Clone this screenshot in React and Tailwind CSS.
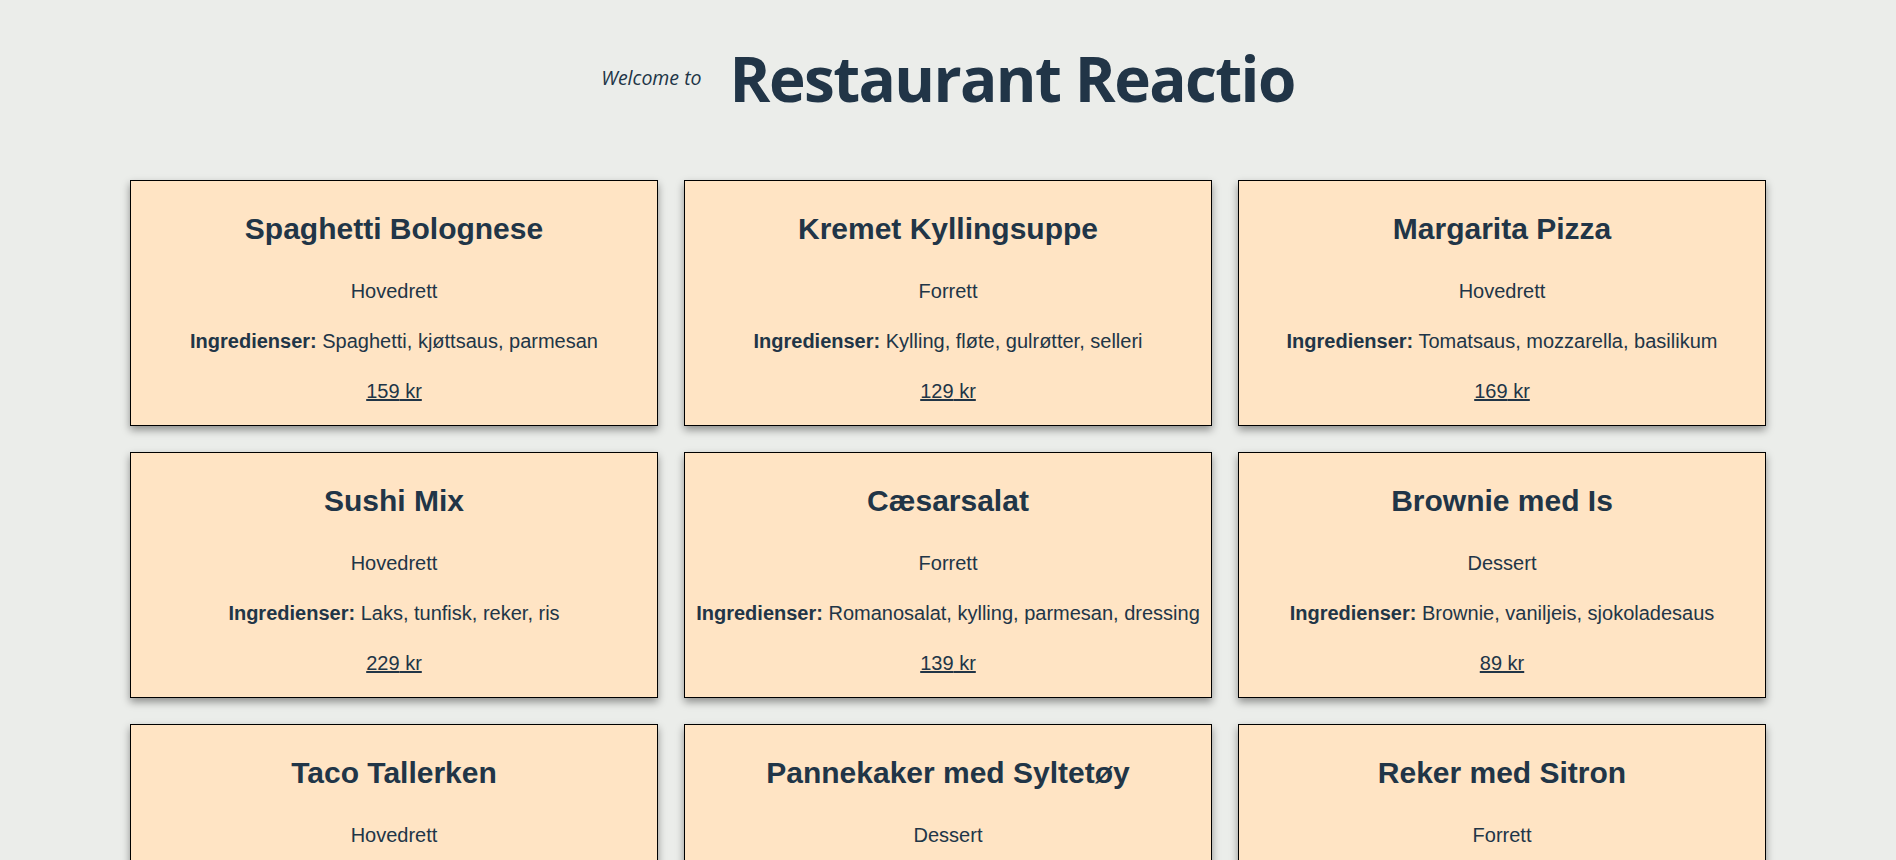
import React from "react";

const dishes = [
  { name: "Spaghetti Bolognese", type: "Hovedrett", ing: "Spaghetti, kjøttsaus, parmesan", price: 159 },
  { name: "Kremet Kyllingsuppe", type: "Forrett", ing: "Kylling, fløte, gulrøtter, selleri", price: 129 },
  { name: "Margarita Pizza", type: "Hovedrett", ing: "Tomatsaus, mozzarella, basilikum", price: 169 },
  { name: "Sushi Mix", type: "Hovedrett", ing: "Laks, tunfisk, reker, ris", price: 229 },
  { name: "Cæsarsalat", type: "Forrett", ing: "Romanosalat, kylling, parmesan, dressing", price: 139 },
  { name: "Brownie med Is", type: "Dessert", ing: "Brownie, vaniljeis, sjokoladesaus", price: 89 },
  { name: "Taco Tallerken", type: "Hovedrett", ing: "Tortilla, kjøttdeig, salsa, ost", price: 189 },
  { name: "Pannekaker med Syltetøy", type: "Dessert", ing: "Pannekaker, syltetøy, sukker", price: 99 },
  { name: "Reker med Sitron", type: "Forrett", ing: "Reker, sitron, majones, brød", price: 149 },
];

function Card({ d }) {
  return (
    <div className="flex flex-col items-center border border-black bg-[#ffe4c4] px-2 pt-[25px] pb-[19px] text-center shadow-[0_4px_8px_rgba(0,0,0,0.4)]">
      <h2 className="text-[30px] font-bold leading-[45px]">{d.name}</h2>
      <p className="mt-[25px] text-[20px] leading-[30px]">{d.type}</p>
      <p className="mt-[20px] text-[20px] leading-[30px]">
        <strong className="font-bold">Ingredienser:</strong> {d.ing}
      </p>
      <p className="mt-[20px] text-[20px] leading-[30px] underline">{d.price} kr</p>
    </div>
  );
}

export default function App() {
  return (
    <div className="min-h-screen bg-[#ebedea] pb-10 text-[#213547]">
      <header className="flex items-center justify-center gap-[28px] pt-[41px] pb-[65px] font-['Open_Sans',sans-serif]">
        <span className="text-[19.5px] font-normal italic leading-[26px]">Welcome to</span>
        <h1 className="text-[62px] font-bold leading-[74px] tracking-[-1.6px]">Restaurant Reactio</h1>
      </header>
      <main className="mx-auto grid w-[1636px] grid-cols-3 gap-x-[26px] gap-y-[26px] font-['Liberation_Sans',Arial,sans-serif]">
        {dishes.map((d) => (
          <Card key={d.name} d={d} />
        ))}
      </main>
    </div>
  );
}
